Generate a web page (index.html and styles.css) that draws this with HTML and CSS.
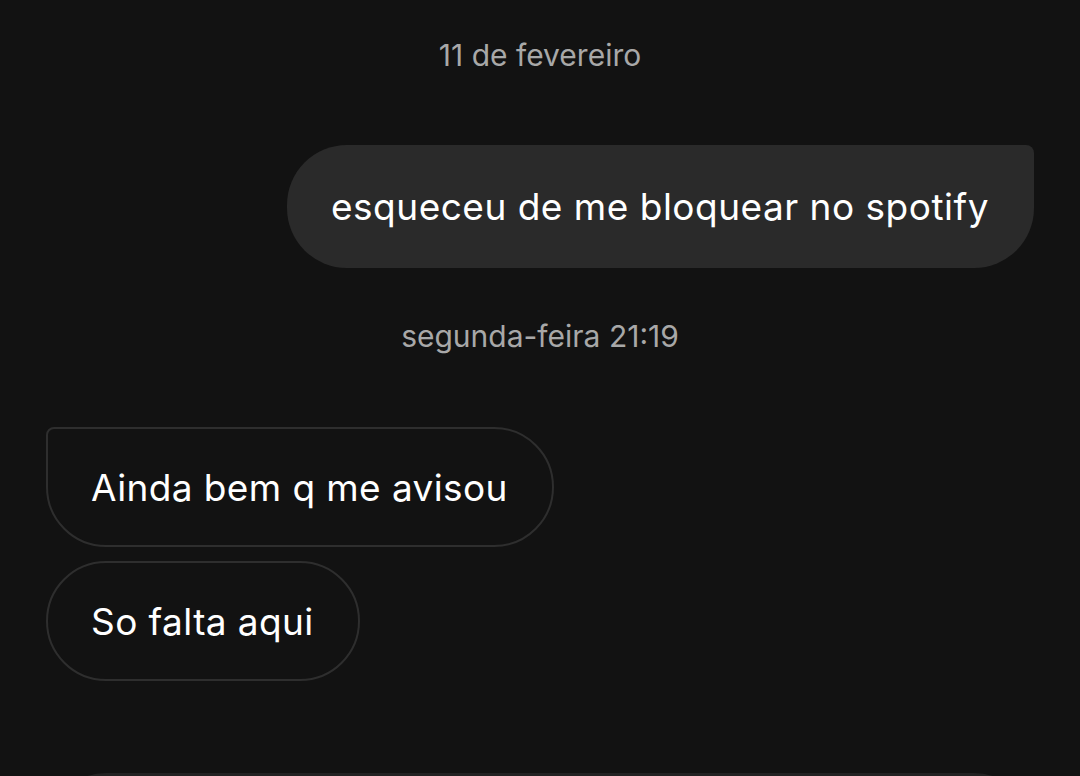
FILE: index.html
```html
<!DOCTYPE html>
<html lang="pt-BR">
<head>
    <meta charset="UTF-8">
    <meta name="viewport" content="width=device-width, initial-scale=1.0">
    <title>Mensagens</title>
    <link rel="stylesheet" href="styles.css">
</head>
<body>
    <div class="thread">
        <div class="timestamp first">11 de fevereiro</div>

        <div class="row sent">
            <div class="bubble outgoing">esqueceu de me bloquear no spotify</div>
        </div>

        <div class="timestamp">segunda-feira 21:19</div>

        <div class="group">
            <div class="row">
                <div class="bubble incoming group-top">Ainda bem q me avisou</div>
            </div>
            <div class="row">
                <div class="bubble incoming">So falta aqui</div>
            </div>
        </div>

        <div class="composer"></div>
    </div>
</body>
</html>
```

FILE: styles.css
```css
html, body {
    margin: 0;
    padding: 0;
    height: 100%;
}
body {
    background-color: #121212;
    color: #fff;
    font-family: Inter, "Noto Sans", sans-serif;
    overflow: hidden;
}
.thread {
    display: flex;
    flex-direction: column;
    padding: 38px 46px 0;
}
.timestamp {
    text-align: center;
    color: #a8a8a8;
    font-size: 30px;
    line-height: 34px;
    margin: 51px 0 74px;
}
.timestamp.first {
    margin: 0 0 73px;
}
.row {
    display: flex;
}
.row.sent {
    justify-content: flex-end;
}
.bubble {
    font-size: 37px;
    line-height: 45px;
    letter-spacing: 0.5px;
    padding: 39px 45px;
    border-radius: 60px;
    white-space: nowrap;
}
.outgoing {
    background-color: #2a2a2a;
    border-radius: 60px 8px 60px 60px;
    padding-left: 44px;
}
.incoming {
    letter-spacing: 0.4px;
    padding: 35.5px 44px 35.5px 43px;
    border: 2px solid #2e2e2e;
}
.incoming.group-top {
    border-top-left-radius: 8px;
}
.group {
    display: flex;
    flex-direction: column;
    gap: 14px;
}
.composer {
    margin-top: 92px;
    height: 120px;
    background-color: #222;
    border-radius: 60px;
}
```
